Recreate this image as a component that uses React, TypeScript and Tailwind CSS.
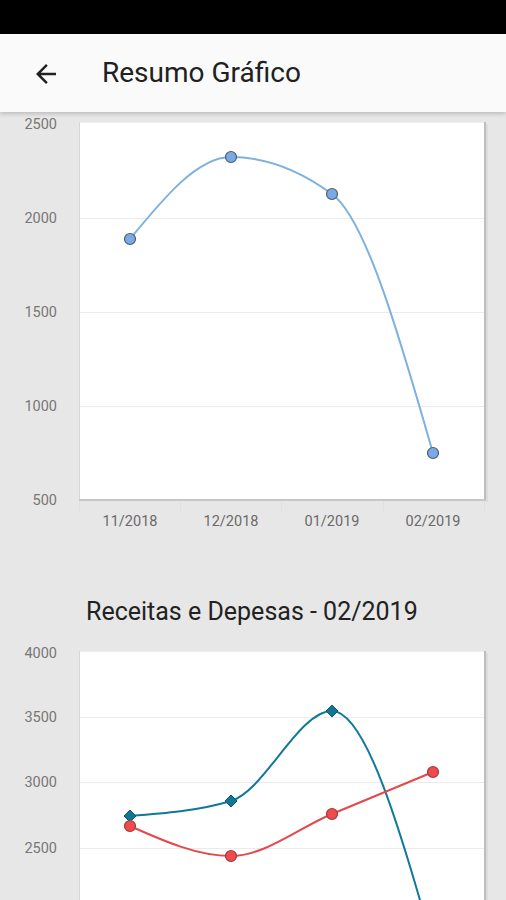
import React from "react";

type Pt = [number, number];

// d3-style monotoneX curve, so the lines bend the same way the app's chart lib does
function monotonePath(pts: Pt[]) {
  const n = pts.length;
  const h: number[] = [];
  const s: number[] = [];
  for (let i = 0; i < n - 1; i++) {
    h[i] = pts[i + 1][0] - pts[i][0];
    s[i] = (pts[i + 1][1] - pts[i][1]) / h[i];
  }
  const t: number[] = new Array(n).fill(0);
  for (let i = 1; i < n - 1; i++) {
    const p = (s[i - 1] * h[i] + s[i] * h[i - 1]) / (h[i - 1] + h[i]);
    t[i] =
      (Math.sign(s[i - 1]) + Math.sign(s[i])) *
        Math.min(Math.abs(s[i - 1]), Math.abs(s[i]), 0.5 * Math.abs(p)) || 0;
  }
  t[0] = (3 * s[0] - t[1]) / 2;
  t[n - 1] = (3 * s[n - 2] - t[n - 2]) / 2;
  let d = `M${pts[0][0]},${pts[0][1]}`;
  for (let i = 0; i < n - 1; i++) {
    const [x0, y0] = pts[i];
    const [x1, y1] = pts[i + 1];
    const dx = h[i] / 3;
    d += ` C${x0 + dx},${y0 + t[i] * dx} ${x1 - dx},${y1 - t[i + 1] * dx} ${x1},${y1}`;
  }
  return d;
}

const labelFont = { fontFamily: "Roboto, 'Liberation Sans', sans-serif" };

const xs = [130, 231, 332, 433];
const months = ["11/2018", "12/2018", "01/2019", "02/2019"];

const saldo: Pt[] = [
  [130, 239],
  [231, 157],
  [332, 194],
  [433, 453],
];

const despesas: Pt[] = [
  [130, 816],
  [231, 801],
  [332, 711],
  [433, 945],
];

const receitas: Pt[] = [
  [130, 826],
  [231, 856],
  [332, 814],
  [433, 772],
];

function Header() {
  return (
    <div className="relative z-10 flex h-[78px] items-center bg-[#fafafa] shadow-[0_2px_4px_rgba(0,0,0,0.18)]">
      <button className="ml-[30px] mt-[2px] flex h-8 w-8 items-center justify-center text-[#212121]">
        <svg viewBox="0 0 24 24" className="h-[30px] w-[30px]" fill="currentColor">
          <path d="M20 11H7.83l5.59-5.59L12 4l-8 8 8 8 1.41-1.41L7.83 13H20v-2z" />
        </svg>
      </button>
      <h1 className="ml-[40px] text-[28px] leading-none text-[#212121]">Resumo Gráfico</h1>
    </div>
  );
}

function SaldoChart() {
  const yTicks: [string, number][] = [
    ["2500", 124],
    ["2000", 218],
    ["1500", 312],
    ["1000", 406],
    ["500", 500],
  ];
  return (
    <svg width={506} height={428} viewBox="0 112 506 428" className="block" style={labelFont}>
      <rect x={79} y={122} width={406} height={378} fill="#ffffff" />
      <line x1={79} y1={122.5} x2={485} y2={122.5} stroke="#efefef" />
      <line x1={79.5} y1={122} x2={79.5} y2={500} stroke="#d6d6d6" />
      {[218, 312, 406].map((y) => (
        <line key={y} x1={80} y1={y + 0.5} x2={486} y2={y + 0.5} stroke="#ebebeb" />
      ))}
      <line x1={485} y1={122} x2={485} y2={501} stroke="#bdbdbd" strokeWidth={2} />
      <line x1={487} y1={124} x2={487} y2={502} stroke="#dcdcdc" strokeWidth={2} />
      <line x1={79} y1={500} x2={486} y2={500} stroke="#c6c6c6" strokeWidth={2} />
      {[79, 180, 281, 383, 484].map((x) => (
        <line key={x} x1={x + 0.5} y1={501} x2={x + 0.5} y2={511} stroke="#dbe0ea" />
      ))}
      {yTicks.map(([label, y]) => (
        <text key={label} x={57} y={y} textAnchor="end" dominantBaseline="central" fontSize={14.5} fill="#777777">
          {label}
        </text>
      ))}
      {months.map((m, i) => (
        <text key={m} x={xs[i]} y={521} textAnchor="middle" dominantBaseline="central" fontSize={14.5} fill="#6a6a6a">
          {m}
        </text>
      ))}
      <path d={monotonePath(saldo)} fill="none" stroke="#7db2e0" strokeWidth={2} />
      {saldo.map(([x, y]) => (
        <circle key={x} cx={x} cy={y} r={5.5} fill="#79aae6" stroke="#4f5e70" strokeWidth={1.2} />
      ))}
    </svg>
  );
}

function FluxoChart() {
  const yTicks: [string, number][] = [
    ["4000", 653],
    ["3500", 717],
    ["3000", 782],
    ["2500", 848],
  ];
  return (
    <svg width={506} height={260} viewBox="0 640 506 260" className="block" style={labelFont}>
      <rect x={79} y={651} width={406} height={300} fill="#ffffff" />
      <line x1={79} y1={651.5} x2={485} y2={651.5} stroke="#efefef" />
      <line x1={79.5} y1={651} x2={79.5} y2={900} stroke="#d6d6d6" />
      {[717, 782, 848].map((y) => (
        <line key={y} x1={80} y1={y + 0.5} x2={486} y2={y + 0.5} stroke="#ebebeb" />
      ))}
      <line x1={485} y1={651} x2={485} y2={900} stroke="#bdbdbd" strokeWidth={2} />
      <line x1={487} y1={653} x2={487} y2={900} stroke="#dcdcdc" strokeWidth={2} />
      {yTicks.map(([label, y]) => (
        <text key={label} x={57} y={y} textAnchor="end" dominantBaseline="central" fontSize={14.5} fill="#777777">
          {label}
        </text>
      ))}
      <path d={monotonePath(despesas)} fill="none" stroke="#12789a" strokeWidth={2} />
      <path d={monotonePath(receitas)} fill="none" stroke="#e4484b" strokeWidth={2} />
      {despesas.slice(0, 3).map(([x, y]) => (
        <polygon
          key={x}
          points={`${x},${y - 6} ${x + 6},${y} ${x},${y + 6} ${x - 6},${y}`}
          fill="#137594"
          stroke="#0c5a72"
          strokeWidth={1}
        />
      ))}
      {receitas.map(([x, y]) => (
        <circle key={x} cx={x} cy={y} r={5.5} fill="#ef4b4f" stroke="#a13b3d" strokeWidth={1.2} />
      ))}
    </svg>
  );
}

export default function App() {
  return (
    <div className="h-[900px] w-[506px] overflow-hidden bg-[#e7e7e7] font-['Roboto','Liberation_Sans',sans-serif]">
      <div className="h-[34px] bg-black" />
      <Header />
      <SaldoChart />
      <div className="flex h-[100px] items-start pl-[86px] pt-[57px]">
        <h2 className="text-[25px] leading-[30px] text-[#222222]">Receitas e Depesas - 02/2019</h2>
      </div>
      <FluxoChart />
    </div>
  );
}
